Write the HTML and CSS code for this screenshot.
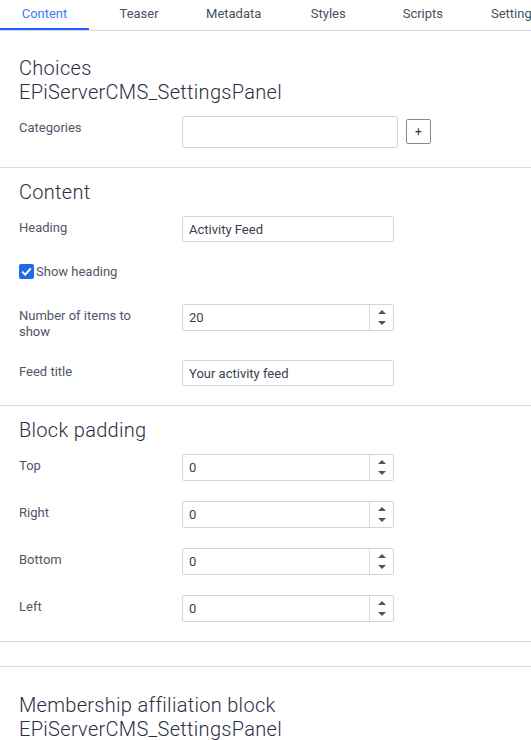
FILE: index.html
```html
<!DOCTYPE html>
<html>
<head>
<meta charset="utf-8">
<link rel="stylesheet" href="styles.css">
</head>
<body>
<nav class="tabs">
  <div class="tab active">Content</div>
  <div class="tab">Teaser</div>
  <div class="tab">Metadata</div>
  <div class="tab">Styles</div>
  <div class="tab">Scripts</div>
  <div class="tab last-tab">Settings</div>
</nav>

<section class="group first">
  <h2>Choices<br>EPiServerCMS_SettingsPanel</h2>
  <div class="row">
    <label class="lbl">Categories</label>
    <div class="field tall"></div>
    <button class="plus">+</button>
  </div>
</section>

<section class="group">
  <h2>Content</h2>
  <div class="row">
    <label class="lbl">Heading</label>
    <div class="field text">Activity Feed</div>
  </div>
  <div class="row check-row">
    <span class="checkbox"><svg viewBox="0 0 15 15" width="15" height="15"><path d="M3.2 7.6 L6.2 10.6 L11.8 4.4" fill="none" stroke="#fff" stroke-width="2"/></svg></span>
    <span class="check-lbl">Show heading</span>
  </div>
  <div class="row">
    <label class="lbl">Number of items to show</label>
    <div class="field num"><span class="val">20</span><span class="spin"><i class="up"></i><i class="down"></i></span></div>
  </div>
  <div class="row">
    <label class="lbl">Feed title</label>
    <div class="field text">Your activity feed</div>
  </div>
</section>

<section class="group">
  <h2>Block padding</h2>
  <div class="row">
    <label class="lbl">Top</label>
    <div class="field num"><span class="val">0</span><span class="spin"><i class="up"></i><i class="down"></i></span></div>
  </div>
  <div class="row">
    <label class="lbl">Right</label>
    <div class="field num"><span class="val">0</span><span class="spin"><i class="up"></i><i class="down"></i></span></div>
  </div>
  <div class="row">
    <label class="lbl">Bottom</label>
    <div class="field num"><span class="val">0</span><span class="spin"><i class="up"></i><i class="down"></i></span></div>
  </div>
  <div class="row">
    <label class="lbl">Left</label>
    <div class="field num"><span class="val">0</span><span class="spin"><i class="up"></i><i class="down"></i></span></div>
  </div>
</section>

<section class="spacer"></section>

<section class="group last">
  <h2>Membership affiliation block<br>EPiServerCMS_SettingsPanel</h2>
</section>
</body>
</html>
```

FILE: styles.css
```css
html, body {
  margin: 0;
  padding: 0;
  background: #fff;
}
body {
  font-family: Roboto, "Liberation Sans", sans-serif;
  color: #2c3045;
  width: 531px;
  overflow: hidden;
}
.tabs {
  display: flex;
  height: 30px;
  border-bottom: 1px solid #dcdcdc;
  white-space: nowrap;
  overflow: hidden;
}
.tab {
  flex: 0 0 89px;
  margin-right: 5.6px;
  text-align: center;
  font-size: 13px;
  line-height: 27px;
  color: #4a4f60;
  box-sizing: border-box;
  border-bottom: 2px solid transparent;
}
.tab.last-tab {
  flex: 0 0 auto;
  margin-right: 0;
  padding-left: 18px;
  text-align: left;
}
.tab.active {
  color: #3f7bf5;
  border-bottom-color: #1a5cff;
}
.group {
  padding: 12px 19px 19px;
  border-bottom: 1px solid #dcdcdc;
}
.group.first {
  padding-top: 25px;
}
.group.last {
  padding-top: 26px;
  border-bottom: none;
}
.spacer {
  height: 24px;
  border-bottom: 1px solid #dcdcdc;
}
h2 {
  margin: 0 0 12px;
  font-size: 20px;
  font-weight: 300;
  line-height: 24px;
  color: #2a2e44;
  letter-spacing: 0.3px;
}
.row {
  display: flex;
  align-items: flex-start;
  margin-top: 20px;
}
h2 + .row {
  margin-top: 0;
}
.lbl {
  flex: 0 0 130px;
  margin-right: 33px;
  font-size: 13px;
  line-height: 16px;
  padding-top: 4px;
  color: #50556a;
}
.field {
  box-sizing: border-box;
  width: 212px;
  height: 26px;
  border: 1px solid #d4d4d4;
  border-radius: 2px;
  font-size: 13px;
  color: #3a3f50;
  display: flex;
  align-items: center;
}
.field.tall {
  width: 216px;
  height: 32px;
}
.field.text {
  padding-left: 6px;
}
.field.num {
  height: 27px;
  justify-content: space-between;
}
.val {
  padding-left: 6px;
}
.spin {
  width: 23px;
  height: 100%;
  border-left: 1px solid #d8d8d8;
  display: flex;
  flex-direction: column;
  align-items: center;
  justify-content: center;
  gap: 7px;
}
.spin i {
  display: block;
  width: 0;
  height: 0;
  border-left: 4px solid transparent;
  border-right: 4px solid transparent;
}
.spin .up {
  border-bottom: 4px solid #555;
}
.spin .down {
  border-top: 4px solid #555;
}
.plus {
  box-sizing: border-box;
  width: 25px;
  height: 25px;
  margin-left: 8px;
  margin-top: 3px;
  padding: 0;
  border: 1px solid #8a8a8a;
  border-radius: 2px;
  background: #fff;
  font-family: Roboto, "Liberation Sans", sans-serif;
  font-size: 12px;
  color: #333;
  line-height: 20px;
}
.check-row {
  margin-top: 22px;
  align-items: center;
  height: 15px;
}
.check-row + .row {
  margin-top: 25px;
}
.checkbox {
  width: 15px;
  height: 15px;
  border-radius: 2px;
  background: #1f6ae8;
  display: block;
}
.checkbox svg {
  display: block;
}
.check-lbl {
  margin-left: 2px;
  font-size: 13px;
  color: #50556a;
}
```
